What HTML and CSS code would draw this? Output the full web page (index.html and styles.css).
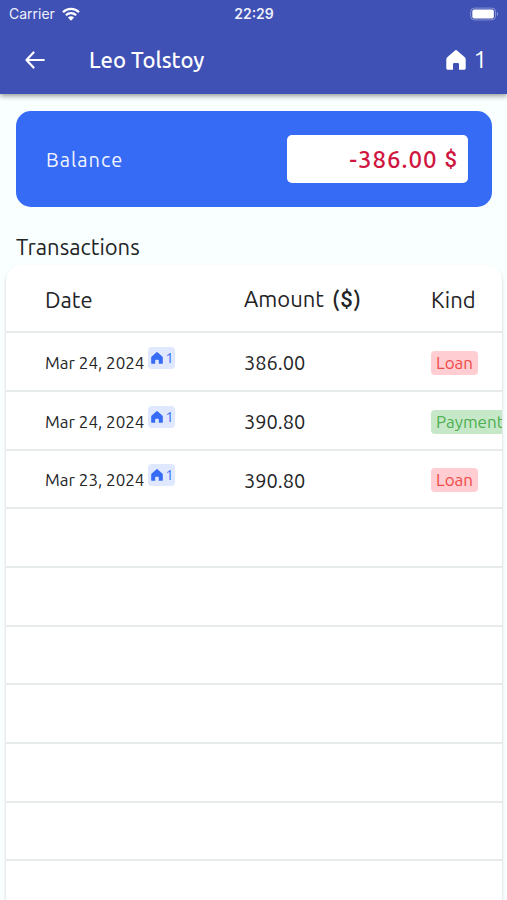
FILE: index.html
```html
<!DOCTYPE html>
<html lang="en">
<head>
<meta charset="utf-8">
<meta name="viewport" content="width=device-width, initial-scale=1">
<title>Leo Tolstoy</title>
<link rel="stylesheet" href="styles.css">
</head>
<body>
<svg class="defs" aria-hidden="true">
  <symbol id="house" viewBox="0 0 20 20">
    <path d="M8.700.7Q10-.5 11.300.7L18.800 7.300Q19.700 8.100 19.700 9.200V18.200Q19.700 19.700 18.200 19.700H13V14.200Q13 13 11.800 13H8.200Q7 13 7 14.200V19.700H1.800Q.3 19.700.3 18.200V9.200Q.3 8.100 1.200 7.300Z" fill="currentColor"/>
  </symbol>
</svg>
<div class="app">
  <header class="top">
    <div class="status">
      <div class="carrier">
        <span>Carrier</span>
        <svg class="wifi" viewBox="0 0 18 14" aria-hidden="true">
          <path d="M1 5.200A11.300 11.300 0 0 1 17 5.200M3.900 8.200A7.200 7.200 0 0 1 14.100 8.200" fill="none" stroke="currentColor" stroke-width="2.300"/>
          <path d="M9 13.800L5.900 10.600A4.400 4.400 0 0 1 12.100 10.600Z" fill="currentColor"/>
        </svg>
      </div>
      <time class="clock">22:29</time>
      <svg class="battery" viewBox="0 0 31 14" aria-hidden="true">
        <rect x=".7" y=".7" width="26.600" height="12.600" rx="4" fill="none" stroke="currentColor" stroke-opacity=".4"/>
        <rect x="2.500" y="2.300" width="23" height="9.400" rx="2" fill="currentColor"/>
        <path d="M28.800 4.700Q31 7 28.800 9.300Z" fill="currentColor" opacity=".5"/>
      </svg>
    </div>
    <div class="bar">
      <button class="back" type="button" aria-label="Back">
        <svg viewBox="0 0 20 18" aria-hidden="true"><path d="M8.500 1.500L1.500 9L8.500 16.500M1.500 9H18.800" fill="none" stroke="currentColor" stroke-width="2.200" stroke-linecap="round" stroke-linejoin="round"/></svg>
      </button>
      <h1>Leo Tolstoy</h1>
      <div class="home"><svg aria-hidden="true"><use href="#house"/></svg><span>1</span></div>
    </div>
  </header>
  <main>
    <section class="balance">
      <span class="label">Balance</span>
      <div class="value"><span>-386.00</span><span class="currency">$</span></div>
    </section>
    <h2>Transactions</h2>
    <div class="card">
      <table>
        <thead><tr><th class="date">Date</th><th class="amount"><div class="heading"><span>Amount</span><span class="unit">(<span class="dollar">$</span>)</span></div></th><th>Kind</th></tr></thead>
        <tbody>
          <tr><td><div class="day"><span>Mar 24, 2024</span><span class="badge"><svg aria-hidden="true"><use href="#house"/></svg>1</span></div></td><td class="sum">386.00</td><td><span class="tag loan">Loan</span></td></tr>
          <tr><td><div class="day"><span>Mar 24, 2024</span><span class="badge"><svg aria-hidden="true"><use href="#house"/></svg>1</span></div></td><td class="sum">390.80</td><td><span class="tag payment">Payment</span></td></tr>
          <tr><td><div class="day"><span>Mar 23, 2024</span><span class="badge"><svg aria-hidden="true"><use href="#house"/></svg>1</span></div></td><td class="sum">390.80</td><td><span class="tag loan">Loan</span></td></tr>
          <tr><td colspan="3"></td></tr>
          <tr><td colspan="3"></td></tr>
          <tr><td colspan="3"></td></tr>
          <tr><td colspan="3"></td></tr>
          <tr><td colspan="3"></td></tr>
          <tr><td colspan="3"></td></tr>
          <tr><td colspan="3"></td></tr>
        </tbody>
      </table>
    </div>
  </main>
</div>
</body>
</html>
```
FILE: styles.css
```css
* { box-sizing: border-box; }
body {
  margin: 0;
  background: #f8fffe;
  color: #222426;
  font-family: Ubuntu, "Noto Sans", sans-serif;
}
.defs { position: absolute; width: 0; height: 0; }
.app { display: flex; flex-direction: column; height: 100vh; overflow: hidden; }

.top {
  flex: none;
  background: #3f51b5;
  color: #fff;
  box-shadow: 0 2px 5px rgba(0, 0, 0, .4);
}
.status {
  display: grid;
  grid-template-columns: 1fr auto 1fr;
  align-items: center;
  height: 27px;
  padding: 0 8px 0 9px;
  font: 14px/20px Inter, sans-serif;
  color: #eef0fb;
}
.carrier { display: flex; align-items: center; gap: 7px; }
.wifi { width: 18px; height: 14px; color: #fff; }
.clock { font-weight: 600; }
.battery { justify-self: end; width: 29px; height: 14px; color: #fff; }
.bar { display: flex; align-items: center; height: 67px; padding: 0 20px 2px 25px; }
.back {
  width: 64px;
  height: 40px;
  padding: 0;
  border: 0;
  background: none;
  color: inherit;
  text-align: left;
}
.back svg { display: block; width: 20px; height: 18px; }
h1 { flex: 1; margin: 0; font-size: 22px; line-height: 28px; font-weight: 500; }
.home { display: flex; align-items: center; gap: 7px; font-size: 24px; line-height: 28px; }
.home svg { width: 20px; height: 20px; }

main { flex: 1; min-height: 0; display: flex; flex-direction: column; padding: 17px 5px 0 6px; }
.balance {
  flex: none;
  display: flex;
  align-items: center;
  justify-content: space-between;
  height: 96px;
  margin: 0 10px;
  padding: 0 24px 0 30px;
  border-radius: 15px;
  background: #366bf6;
}
.label { color: #f1f5ff; font-size: 20px; letter-spacing: 1px; }
.value {
  display: flex;
  align-items: center;
  justify-content: flex-end;
  gap: 7px;
  width: 181px;
  height: 48px;
  padding: 0 10px;
  border-radius: 5px;
  background: #fff;
  color: #d0163f;
  font-size: 24px;
  font-weight: 500;
  letter-spacing: 1px;
}
.currency { font-family: Roboto, sans-serif; font-size: 22px; }
h2 { flex: none; margin: 26px 10px 4px; font-size: 22px; line-height: 28px; font-weight: 400; }

.card {
  flex: 1;
  min-height: 0;
  overflow: hidden;
  border-radius: 15px 15px 0 0;
  background: #fff;
  box-shadow: 0 2px 3px rgba(0, 0, 0, .2);
}
table { width: 560px; table-layout: fixed; border-collapse: separate; border-spacing: 0; }
th, td { height: 59px; padding: 2px 0 0; border-bottom: 2px solid #e8ebec; text-align: left; font-weight: 400; vertical-align: middle; }
tbody tr:nth-child(3n) td { height: 58px; }
th { height: 68px; font-size: 22px; }
th:first-child, td:first-child { padding-left: 39px; }
.date { width: 238px; }
.amount { width: 187px; }
.heading { display: flex; align-items: baseline; gap: 8px; }
.unit { font-weight: 500; letter-spacing: 1px; }
.dollar { font-family: Roboto, sans-serif; }
.day { display: flex; align-items: center; gap: 4px; font-size: 17px; line-height: 24px; }
.badge {
  display: flex;
  align-items: center;
  gap: 2px;
  height: 22px;
  margin-bottom: 10px;
  padding: 0 2px 0 3px;
  border-radius: 4px;
  background: #dfe8ff;
  color: #366bf6;
  font-size: 14px;
}
.badge svg { width: 12px; height: 12px; }
.sum { font-size: 20px; }
.tag { display: inline-block; padding: 0 5px; border-radius: 4px; font-size: 17px; line-height: 24px; }
.loan { background: #ffcdd2; color: #ef4b48; }
.payment { background: #c6e8c8; color: #4caf50; }
```
